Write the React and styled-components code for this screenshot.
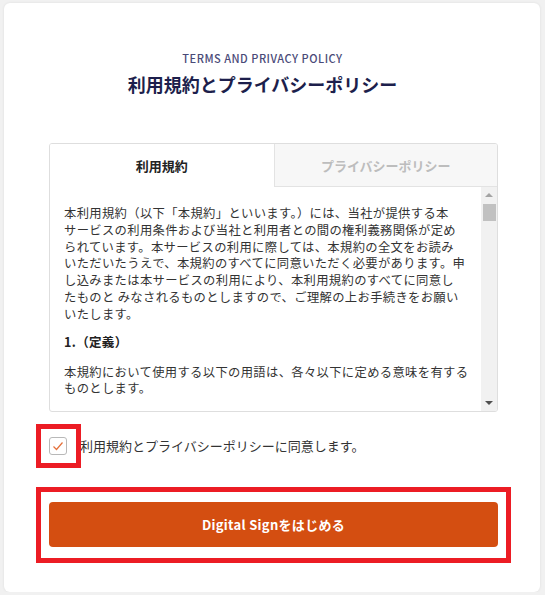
import React from 'react';
import styled, { createGlobalStyle } from 'styled-components';

const GlobalStyle = createGlobalStyle`
  html, body {
    margin: 0;
    padding: 0;
    background: #f1f1f1;
  }
  body {
    font-family: 'Noto Sans CJK JP', 'Noto Sans', sans-serif;
    color: #333;
  }
`;

// Карточка
const Card = styled.div`
  box-sizing: border-box;
  margin: 3px 5px 0 4px;
  height: 589px;
  background: #fff;
  border-radius: 6px;
  box-shadow: 0 0 3px rgba(0, 0, 0, 0.08);
  padding: 48px 42px 0 45px;
`;

const Header = styled.header`
  display: flex;
  flex-direction: column;
  align-items: center;
  padding-right: 22px;
`;

const Eyebrow = styled.div`
  font-family: 'Noto Sans CJK JP', sans-serif;
  font-size: 11px;
  line-height: 14px;
  font-weight: 500;
  letter-spacing: 0.5px;
  color: #4a4a78;
`;

const Title = styled.h1`
  margin: 7px 0 0;
  font-size: 18px;
  line-height: 24px;
  font-weight: 700;
  color: #1d1f4c;
`;

const TermsBox = styled.div`
  margin-top: 47px;
  border: 1px solid #dedede;
  border-radius: 3px;
  overflow: hidden;
`;

const Tabs = styled.div`
  display: grid;
  grid-template-columns: 1fr 1fr;
  height: 43px;
`;

const Tab = styled.div`
  display: flex;
  align-items: center;
  justify-content: center;
  font-size: 13px;
  font-weight: 700;
  color: ${(p) => (p.$active ? '#222' : '#bdbdbd')};
  background: ${(p) => (p.$active ? '#fff' : '#f7f7f7')};
  border-left: ${(p) => (p.$active ? 'none' : '1px solid #e3e3e3')};
  border-bottom: ${(p) => (p.$active ? 'none' : '1px solid #e3e3e3')};
`;

const ScrollArea = styled.div`
  display: flex;
  height: 224px;
`;

const ScrollText = styled.div`
  flex: 1;
  overflow: hidden;
  padding: 18px 0 0 14px;
  font-size: 12.3px;
  letter-spacing: 0.35px;
  color: #333;
`;

const Para = styled.p`
  margin: 0;
  line-height: 16.8px;
  white-space: nowrap;
`;

const SectionHead = styled.h3`
  margin: 10px 0 14px;
  font-size: 12.5px;
  line-height: 17px;
  font-weight: 700;
  color: #222;
`;

const Track = styled.div`
  width: 16px;
  background: #f1f1f1;
  display: flex;
  flex-direction: column;
  align-items: center;
  padding: 6px 0 6px;
  box-sizing: border-box;
`;

const Arrow = styled.div`
  width: 0;
  height: 0;
  border-left: 4px solid transparent;
  border-right: 4px solid transparent;
  ${(p) =>
    p.$down
      ? 'border-top: 4px solid #505050; margin-top: auto;'
      : 'border-bottom: 4px solid #a3a3a3;'}
`;

const Thumb = styled.div`
  margin-top: 7px;
  width: 13px;
  height: 17px;
  background: #c1c1c1;
`;

const AgreeRow = styled.label`
  margin-top: 24px;
  display: flex;
  align-items: center;
  gap: 13px;
  font-size: 13px;
  color: #333;
`;

const CheckWrap = styled.span`
  position: relative;
  display: inline-flex;
`;

const Checkbox = styled.span`
  box-sizing: border-box;
  width: 18px;
  height: 18px;
  border: 1px solid #b8b8b8;
  border-radius: 3px;
  display: flex;
  align-items: center;
  justify-content: center;
  background: #fff;
`;

// Красная рамка-пометка поверх элемента
const Marker = styled.span`
  position: absolute;
  top: ${(p) => p.$t}px;
  left: ${(p) => p.$l}px;
  right: ${(p) => p.$r}px;
  bottom: ${(p) => p.$b}px;
  border: 5px solid #ec1c24;
  pointer-events: none;
`;

const ButtonWrap = styled.div`
  position: relative;
  margin-top: 47px;
`;

const StartButton = styled.button`
  width: 100%;
  height: 45px;
  border: none;
  border-radius: 4px;
  background: #d44e11;
  color: #fff;
  font-family: 'Noto Sans CJK JP', sans-serif;
  font-size: 13px;
  font-weight: 700;
  letter-spacing: 0.3px;
  cursor: pointer;
`;

const App = () => {
  return (
    <>
      <GlobalStyle />
      <Card>
        <Header>
          <Eyebrow>TERMS AND PRIVACY POLICY</Eyebrow>
          <Title>利用規約とプライバシーポリシー</Title>
        </Header>

        <TermsBox>
          <Tabs>
            <Tab $active>利用規約</Tab>
            <Tab>プライバシーポリシー</Tab>
          </Tabs>
          <ScrollArea>
            <ScrollText>
              <Para>
                本利用規約（以下「本規約」といいます。）には、当社が提供する本<br />
                サービスの利用条件および当社と利用者との間の権利義務関係が定め<br />
                られています。本サービスの利用に際しては、本規約の全文をお読み<br />
                いただいたうえで、本規約のすべてに同意いただく必要があります。申<br />
                し込みまたは本サービスの利用により、本利用規約のすべてに同意し<br />
                たものと みなされるものとしますので、ご理解の上お手続きをお願い<br />
                いたします。
              </Para>
              <SectionHead>1.（定義）</SectionHead>
              <Para>
                本規約において使用する以下の用語は、各々以下に定める意味を有する<br />
                ものとします。
              </Para>
            </ScrollText>
            <Track>
              <Arrow />
              <Thumb />
              <Arrow $down />
            </Track>
          </ScrollArea>
        </TermsBox>

        <AgreeRow>
          <CheckWrap>
            <Checkbox>
              <svg width="12" height="10" viewBox="0 0 12 10">
                <polyline points="1.5,5.5 4.5,8.5 10.5,1.5" fill="none" stroke="#e5703a" strokeWidth="1.2" />
              </svg>
            </Checkbox>
            <Marker $t={-13} $l={-13} $r={-14} $b={-13} />
          </CheckWrap>
          利用規約とプライバシーポリシーに同意します。
        </AgreeRow>

        <ButtonWrap>
          <StartButton>Digital Signをはじめる</StartButton>
          <Marker $t={-15} $l={-13} $r={-13} $b={-16} />
        </ButtonWrap>
      </Card>
    </>
  );
};

export default App;
